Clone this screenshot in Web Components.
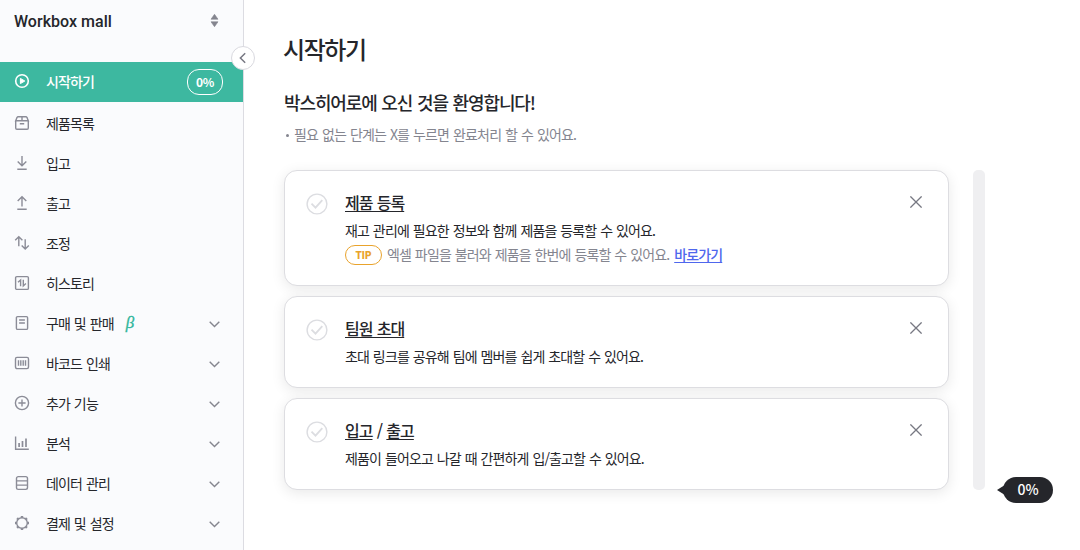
<!DOCTYPE html>
<html lang="ko">
<head>
<meta charset="UTF-8">
<title>시작하기</title>
<style>
  body {
    margin: 0;
    height: 550px;
    overflow: hidden;
    background: #fff;
    color: #25262b;
    font-family: "Noto Sans CJK KR", "Noto Sans", sans-serif;
    font-size: 14px;
    letter-spacing: -0.87px;
    word-spacing: 0.8px;
  }
</style>
</head>
<body>
<app-layout>
  <side-bar slot="side" team="Workbox mall">
    <menu-item icon="play" badge="0%" active>시작하기</menu-item>
    <menu-item icon="box">제품목록</menu-item>
    <menu-item icon="in">입고</menu-item>
    <menu-item icon="out">출고</menu-item>
    <menu-item icon="adjust">조정</menu-item>
    <menu-item icon="history">히스토리</menu-item>
    <menu-item icon="doc" beta more>구매 및 판매</menu-item>
    <menu-item icon="barcode" more>바코드 인쇄</menu-item>
    <menu-item icon="plus" more>추가 기능</menu-item>
    <menu-item icon="chart" more>분석</menu-item>
    <menu-item icon="data" more>데이터 관리</menu-item>
    <menu-item icon="gear" more>결제 및 설정</menu-item>
  </side-bar>
  <start-page>
    <span slot="title">시작하기</span>
    <span slot="welcome">박스히어로에 오신 것을 환영합니다!</span>
    <span slot="hint">필요 없는 단계는 X를 누르면 완료처리 할 수 있어요.</span>
    <step-card>
      <u slot="title">제품 등록</u>
      재고 관리에 필요한 정보와 함께 제품을 등록할 수 있어요.
      <tip-line slot="tip" link="바로가기">엑셀 파일을 불러와 제품을 한번에 등록할 수 있어요.</tip-line>
    </step-card>
    <step-card>
      <u slot="title">팀원 초대</u>
      초대 링크를 공유해 팀에 멤버를 쉽게 초대할 수 있어요.
    </step-card>
    <step-card>
      <span slot="title"><u>입고</u> / <u>출고</u></span>
      제품이 들어오고 나갈 때 간편하게 입/출고할 수 있어요.
    </step-card>
    <progress-bar slot="progress" value="0%"></progress-bar>
  </start-page>
</app-layout>

<script>
const icons = {
  play: '<circle cx="8" cy="8" r="6.3" stroke-width="1.6"/><path d="M6.4 5.4v5.2L10.8 8z" fill="currentColor" stroke-width="1"/>',
  box: '<path d="M1.7 5.8v7.2q0 1.2 1.2 1.2h10.2q1.2 0 1.2-1.2V5.8M1.7 5.8h12.6L13 2.6q-.3-.9-1.2-.9H4.2q-.9 0-1.2.9zM8 1.7v4.1M5.8 8.7h4.4"/>',
  in: '<path d="M8 1v9.6M3.7 6.6 8 10.8l4.3-4.2M3.3 14.2h9.4"/>',
  out: '<path d="M8 11.5V1.8M3.7 6 8 1.7 12.3 6M3.3 14.2h9.4"/>',
  adjust: '<path d="M4.8 11.3V1.9M1.2 5.3l3.6-3.5 3.6 3.5M11.2 4.3v9.6M7.7 10.5l3.5 3.5 3.6-3.5"/>',
  history: '<rect x="1.6" y="1.6" width="12.8" height="12.8" rx="1.2"/><path d="M4 7.3 6.6 5v6.3M9.3 4.7v6.2l2.6-2.3"/>',
  doc: '<rect x="2.4" y="1.6" width="11.2" height="12.8" rx="1.2"/><path d="M5.1 5h5.8M5.1 8h5.8"/>',
  barcode: '<rect x="1.5" y="2.4" width="13" height="11.2" rx="1.5"/><path d="M4.5 5.2v5.6M6.8 5.2v5.6M9.2 5.2v5.6M11.5 5.2v5.6"/>',
  plus: '<circle cx="8" cy="8" r="6.6"/><path d="M8 4.4v7.2M4.4 8h7.2"/>',
  chart: '<path d="M1.6 1.4v12.9h13.2"/><path d="M5.1 8v4M8.5 6v6M12 3.4V12" stroke-width="1.7"/>',
  data: '<rect x="2.5" y="1.6" width="11" height="12.8" rx="1.8"/><path d="M2.5 5.9h11M2.5 10.1h11"/>',
  gear: '<circle cx="8" cy="8" r="5.3" stroke-width="1.4"/><path d="M8 1v1.8M8 13.2V15M1 8h1.8M13.2 8H15M3.1 3.1l1.2 1.2M11.7 11.7l1.2 1.2M3.1 12.9l1.2-1.2M11.7 4.3l1.2-1.2" stroke-width="2.4"/>'
};

class AppLayout extends HTMLElement {
  constructor() {
    super();
    this.attachShadow({ mode: 'open' }).innerHTML = `
      <style>
        :host {
          display: grid;
          grid-template-columns: 244px 1fr;
          height: 550px;
        }
      </style>
      <slot name="side"></slot>
      <slot></slot>
    `;
  }
}

class SideBar extends HTMLElement {
  constructor() {
    super();
    this.attachShadow({ mode: 'open' }).innerHTML = `
      <style>
        :host {
          display: block;
          position: relative;
          box-sizing: border-box;
          height: 550px;
          background: #fafbfd;
          border-right: 1px solid #dcdce2;
        }
        header {
          display: flex;
          justify-content: space-between;
          box-sizing: border-box;
          height: 62px;
          padding: 10px 24px 0 14px;
          font: 500 16px/24px Roboto, sans-serif;
          letter-spacing: 0.03px;
          word-spacing: 0;
        }
        header svg {
          margin-top: 4px;
        }
        .fold {
          position: absolute;
          top: 46px;
          right: -12px;
          display: flex;
          align-items: center;
          justify-content: center;
          box-sizing: border-box;
          width: 24px;
          height: 24px;
          border: 1px solid #d9d9df;
          border-radius: 50%;
          background: #fff;
        }
      </style>
      <header>
        <span>${this.getAttribute('team')}</span>
        <svg width="9" height="13" viewBox="0 0 9 13" fill="#84858f"><path d="M4.5.3 8 5.2H1zM4.5 12.7 8 7.8H1z" stroke="#84858f" stroke-width=".6" stroke-linejoin="round"/></svg>
      </header>
      <nav><slot></slot></nav>
      <div class="fold">
        <svg width="12" height="12" viewBox="0 0 12 12" fill="none" stroke="#777883" stroke-width="1.5"><path d="M8.2 1.3 3.4 6l4.8 4.7"/></svg>
      </div>
    `;
  }
}

class MenuItem extends HTMLElement {
  constructor() {
    super();
    const badge = this.getAttribute('badge');
    this.attachShadow({ mode: 'open' }).innerHTML = `
      <style>
        :host {
          display: flex;
          align-items: center;
          box-sizing: border-box;
          height: 40px;
          padding: 0 20px 0 14px;
          line-height: 20px;
        }
        :host([active]) {
          margin-bottom: 2px;
          background: #3db8a0;
          color: #fff;
          font-weight: 500;
        }
        .icon {
          flex: none;
          margin: 0 16px 2px 0;
          color: #8b8c97;
        }
        :host([active]) .icon {
          color: #fff;
        }
        .label {
          margin-bottom: 2px;
        }
        .beta {
          margin: -3px 0 0 12px;
          color: #2fb69b;
          font: italic 17px/20px "Liberation Serif", serif;
          -webkit-text-stroke: 0.3px #2fb69b;
        }
        .badge {
          box-sizing: border-box;
          width: 36px;
          height: 26px;
          margin-left: auto;
          border: 1px solid #fff;
          border-radius: 12px;
          font-size: 12px;
          font-weight: 700;
          line-height: 24px;
          letter-spacing: -0.2px;
          text-align: center;
        }
        .more {
          margin: 1px 3px 0 auto;
        }
      </style>
      <svg class="icon" width="16" height="16" viewBox="0 0 16 16" fill="none" stroke="currentColor" stroke-width="1.4">${icons[this.getAttribute('icon')]}</svg>
      <span class="label"><slot></slot></span>
      ${this.hasAttribute('beta') ? '<span class="beta">β</span>' : ''}
      ${badge ? `<span class="badge">${badge}</span>` : ''}
      ${this.hasAttribute('more') ? '<svg class="more" width="11" height="7" viewBox="0 0 11 7" fill="none" stroke="#85868f" stroke-width="1.4"><path d="M.7.7 5.5 5.6 10.3.7"/></svg>' : ''}
    `;
  }
}

class StartPage extends HTMLElement {
  constructor() {
    super();
    this.attachShadow({ mode: 'open' }).innerHTML = `
      <style>
        :host {
          display: block;
          padding: 31px 27px 0 40px;
        }
        h1 {
          margin: 0 0 0 -1px;
          font-size: 24px;
          font-weight: 500;
          line-height: 36px;
          letter-spacing: -1.4px;
        }
        h2 {
          margin: 21px 0 0;
          font-size: 18px;
          font-weight: 500;
          line-height: 28px;
          letter-spacing: -1.12px;
        }
        p {
          display: flex;
          align-items: center;
          gap: 5px;
          margin: 8px 0 26px;
          color: #84858f;
          line-height: 20px;
          letter-spacing: -0.84px;
        }
        p::before {
          content: "";
          width: 3px;
          height: 3px;
          margin: 2px 0 0 2px;
          border-radius: 50%;
          background: #84858f;
        }
        .row {
          display: flex;
          gap: 24px;
        }
        .steps {
          display: flex;
          flex-direction: column;
          gap: 10px;
          width: 665px;
        }
      </style>
      <h1><slot name="title"></slot></h1>
      <h2><slot name="welcome"></slot></h2>
      <p><slot name="hint"></slot></p>
      <div class="row">
        <div class="steps"><slot></slot></div>
        <slot name="progress"></slot>
      </div>
    `;
  }
}

class StepCard extends HTMLElement {
  constructor() {
    super();
    this.attachShadow({ mode: 'open' }).innerHTML = `
      <style>
        :host {
          display: flex;
          align-items: flex-start;
          box-sizing: border-box;
          padding: 19px 26px 18px 21px;
          border: 1px solid #dddde1;
          border-radius: 13px;
          background: #fff;
          box-shadow: 0 3px 14px rgba(0, 0, 0, 0.09);
        }
        .check {
          margin-top: 3px;
        }
        .text {
          flex: 1;
          margin-left: 17px;
          line-height: 24px;
        }
        h3 {
          margin: 0 0 4px;
          font-size: 16px;
          font-weight: 500;
          line-height: 24px;
          letter-spacing: -0.99px;
        }
        ::slotted(*) {
          text-underline-offset: 2px;
        }
        .desc {
          height: 25px;
        }
        .close {
          margin-top: 6px;
        }
      </style>
      <svg class="check" width="22" height="22" viewBox="0 0 22 22" fill="none" stroke="#dcdde1"><circle cx="11" cy="11" r="9.9" stroke-width="1.4"/><path d="m5.5 10.7 4 4 6.8-7.5" stroke-width="1.8"/></svg>
      <div class="text">
        <h3><slot name="title"></slot></h3>
        <div class="desc"><slot></slot></div>
        <slot name="tip"></slot>
      </div>
      <svg class="close" width="12" height="12" viewBox="0 0 12 12" stroke="#777882" stroke-width="1.3"><path d="m.4.4 11.2 11.2M11.6.4.4 11.6"/></svg>
    `;
  }
}

class TipLine extends HTMLElement {
  constructor() {
    super();
    this.attachShadow({ mode: 'open' }).innerHTML = `
      <style>
        :host {
          display: flex;
          align-items: center;
          height: 24px;
          color: #84858f;
        }
        b {
          box-sizing: border-box;
          width: 37px;
          height: 20px;
          margin-right: 5px;
          border: 1px solid #e9a32c;
          border-radius: 10px;
          color: #e9a32c;
          font: 900 10px/19px Roboto, sans-serif;
          letter-spacing: 0;
          text-align: center;
        }
        span {
          margin-bottom: 2px;
        }
        a {
          margin-left: 5px;
          color: #4f67ed;
          font-weight: 500;
          text-decoration: underline;
          text-underline-offset: 2px;
        }
      </style>
      <b>TIP</b>
      <span><slot></slot><a>${this.getAttribute('link')}</a></span>
    `;
  }
}

class ProgressBar extends HTMLElement {
  constructor() {
    super();
    this.attachShadow({ mode: 'open' }).innerHTML = `
      <style>
        :host {
          position: relative;
          width: 12px;
          border-radius: 5px;
          background: #efeff1;
        }
        .bubble {
          position: absolute;
          left: 24px;
          bottom: -13px;
          display: flex;
          align-items: center;
          color: #25262b;
        }
        .bubble svg {
          margin-right: -5px;
        }
        .bubble span {
          width: 50px;
          height: 26px;
          border-radius: 13px;
          background: #25262b;
          color: #fff;
          font-weight: 500;
          line-height: 25px;
          letter-spacing: 0;
          text-align: center;
        }
      </style>
      <div class="bubble">
        <svg width="11" height="14" viewBox="0 0 11 14" fill="currentColor"><path d="M0 7 11 0v14z"/></svg>
        <span>${this.getAttribute('value')}</span>
      </div>
    `;
  }
}

customElements.define('app-layout', AppLayout);
customElements.define('side-bar', SideBar);
customElements.define('menu-item', MenuItem);
customElements.define('start-page', StartPage);
customElements.define('step-card', StepCard);
customElements.define('tip-line', TipLine);
customElements.define('progress-bar', ProgressBar);
</script>
</body>
</html>
